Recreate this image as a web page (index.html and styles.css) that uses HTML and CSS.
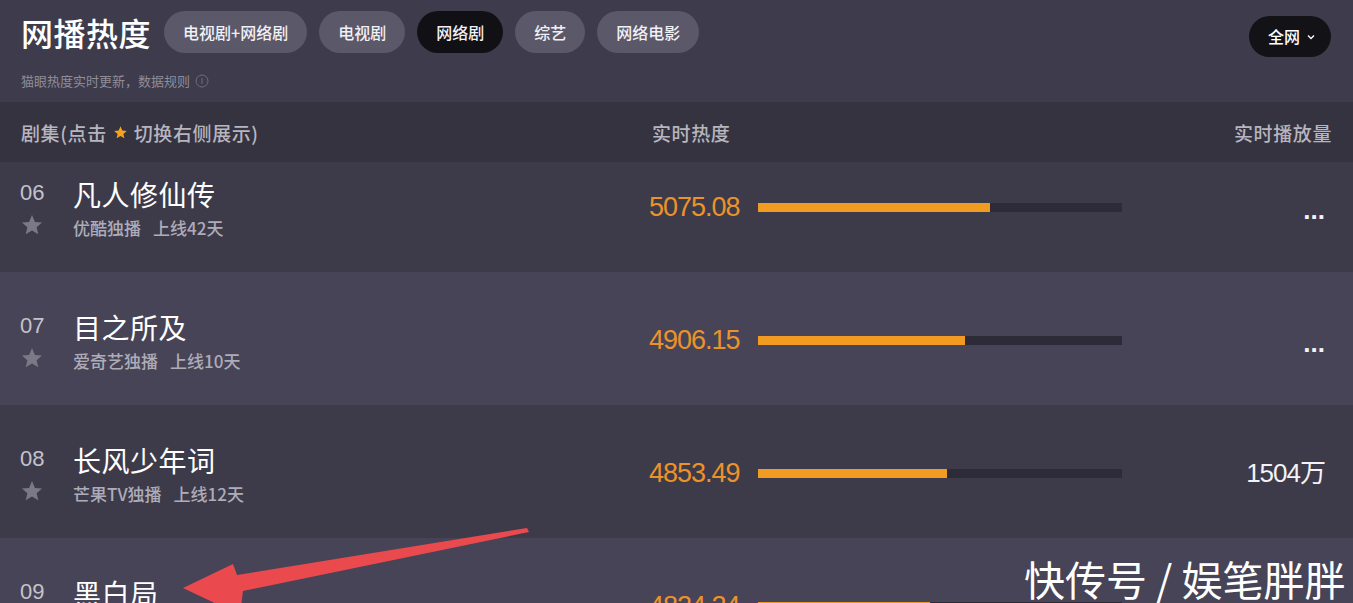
FILE: index.html
```html
<!DOCTYPE html>
<html lang="zh-CN">
<head>
    <meta charset="UTF-8">
    <meta name="viewport" content="width=device-width, initial-scale=1.0">
    <title>网播热度</title>
    <link rel="stylesheet" href="styles.css">
</head>
<body>
    <div class="top">
      <div class="top-bar">
        <h1 class="title">网播热度</h1>
        <div class="tabs">
          <span class="tab">电视剧+网络剧</span>
          <span class="tab">电视剧</span>
          <span class="tab active">网络剧</span>
          <span class="tab">综艺</span>
          <span class="tab">网络电影</span>
        </div>
        <div class="area">全网
          <svg class="caret" width="8" height="6" viewBox="0 0 8 6"><polyline points="1,1.5 4,4.5 7,1.5" fill="none" stroke="#fff" stroke-width="1.3"/></svg>
        </div>
      </div>
      <div class="note">猫眼热度实时更新，数据规则
        <svg class="info" width="14" height="14" viewBox="0 0 14 14"><circle cx="7" cy="7" r="6" fill="none" stroke="#6f6d7a" stroke-width="1"/><line x1="7" y1="4" x2="7" y2="10" stroke="#6f6d7a" stroke-width="1"/></svg>
      </div>
    </div>

    <div class="thead">
      <div class="th-name">剧集(点击
        <svg class="hstar" width="15" height="15" viewBox="0 0 24 24"><path d="M12 2l2.9 6.9 7.1.6-5.4 4.7 1.7 7-6.3-3.8-6.3 3.8 1.7-7L1.9 9.5l7.2-.6z" fill="#f5a21f"/></svg>
        切换右侧展示)</div>
      <div class="th-heat">实时热度</div>
      <div class="th-play">实时播放量</div>
    </div>

    <div class="list">
      <div class="row dark first">
        <div class="rank"><div class="num">06</div>
          <svg class="star" width="24" height="24" viewBox="0 0 24 24"><path d="M12 2l2.9 6.9 7.1.6-5.4 4.7 1.7 7-6.3-3.8-6.3 3.8 1.7-7L1.9 9.5l7.2-.6z"/></svg></div>
        <div class="name"><div class="show">凡人修仙传</div><div class="meta">优酷独播<span class="days">上线42天</span></div></div>
        <div class="heat"><span class="hnum">5075.08</span><span class="bar"><span class="fill" style="width:63.7%"></span></span></div>
        <div class="play dots">...</div>
      </div>
      <div class="row light">
        <div class="rank"><div class="num">07</div>
          <svg class="star" width="24" height="24" viewBox="0 0 24 24"><path d="M12 2l2.9 6.9 7.1.6-5.4 4.7 1.7 7-6.3-3.8-6.3 3.8 1.7-7L1.9 9.5l7.2-.6z"/></svg></div>
        <div class="name"><div class="show">目之所及</div><div class="meta">爱奇艺独播<span class="days">上线10天</span></div></div>
        <div class="heat"><span class="hnum">4906.15</span><span class="bar"><span class="fill" style="width:56.9%"></span></span></div>
        <div class="play dots">...</div>
      </div>
      <div class="row dark">
        <div class="rank"><div class="num">08</div>
          <svg class="star" width="24" height="24" viewBox="0 0 24 24"><path d="M12 2l2.9 6.9 7.1.6-5.4 4.7 1.7 7-6.3-3.8-6.3 3.8 1.7-7L1.9 9.5l7.2-.6z"/></svg></div>
        <div class="name"><div class="show">长风少年词</div><div class="meta">芒果TV独播<span class="days">上线12天</span></div></div>
        <div class="heat"><span class="hnum">4853.49</span><span class="bar"><span class="fill" style="width:51.9%"></span></span></div>
        <div class="play">1504万</div>
      </div>
      <div class="row light">
        <div class="rank"><div class="num">09</div>
          <svg class="star" width="24" height="24" viewBox="0 0 24 24"><path d="M12 2l2.9 6.9 7.1.6-5.4 4.7 1.7 7-6.3-3.8-6.3 3.8 1.7-7L1.9 9.5l7.2-.6z"/></svg></div>
        <div class="name"><div class="show">黑白局</div><div class="meta">爱奇艺独播<span class="days">上线5天</span></div></div>
        <div class="heat"><span class="hnum">4824.24</span><span class="bar"><span class="fill" style="width:47.3%"></span></span></div>
        <div class="play dots">...</div>
      </div>
    </div>

    <svg class="arrow" width="1353" height="603" viewBox="0 0 1353 603">
      <polygon points="183,588 233,564 237,575 527,528 529,532 243,591 240,615" fill="#ea4a4e"/>
    </svg>
    <div class="mark">快传号 / 娱笔胖胖</div>
</body>
</html>
```

FILE: styles.css
```css
body {
    margin: 0;
    height: 603px;
    overflow: hidden;
    position: relative;
    background-color: #3e3c4c;
    font-family: "Noto Sans CJK SC", "Liberation Sans", sans-serif;
    color: #fff;
  }

  .top {
    padding: 11px 22px 0 21px;
    height: 102px;
    box-sizing: border-box;
  }

  .top-bar {
    display: flex;
    align-items: flex-start;
  }

  .title {
    margin: 0;
    font-size: 32px;
    font-weight: 500;
    line-height: 42px;
    height: 42px;
    letter-spacing: 0.5px;
  }

  .tabs {
    display: flex;
    gap: 12px;
    margin-left: 13px;
    flex: 1;
  }

  .tab {
    height: 42px;
    line-height: 42px;
    padding: 0 19px;
    border-radius: 21px;
    background-color: #5a5869;
    font-size: 16px;
    font-weight: 500;
    color: #f1f0f4;
  }

  .tab.active {
    background-color: #111015;
  }

  .area {
    margin-top: 5px;
    height: 41px;
    width: 82px;
    box-sizing: border-box;
    padding-left: 19px;
    border-radius: 21px;
    background-color: #131217;
    font-size: 16px;
    font-weight: 500;
    line-height: 41px;
    display: flex;
    align-items: center;
    gap: 7px;
  }

  .note {
    margin-top: 15px;
    font-size: 13px;
    line-height: 18px;
    color: #8f8d99;
    display: flex;
    align-items: center;
    gap: 5px;
  }

  .thead {
    display: flex;
    align-items: center;
    height: 60px;
    padding: 0 21px;
    background-color: #35333f;
    font-size: 19px;
    font-weight: 500;
    letter-spacing: 0.6px;
    color: #b7b5bf;
  }

  .th-name {
    width: 631px;
    display: flex;
    align-items: center;
    gap: 6px;
  }

  .th-heat {
    flex: 1;
  }

  .list {
    height: 441px;
    overflow: hidden;
  }

  .row {
    display: flex;
    align-items: flex-start;
    height: 133px;
    box-sizing: border-box;
    padding: 38px 28px 0 20px;
  }

  .row.first {
    margin-top: -23px;
  }

  .dark {
    background-color: #3d3b4a;
  }

  .light {
    background-color: #464456;
  }

  .rank {
    width: 53px;
  }

  .num {
    margin-top: 3px;
    font-family: "Liberation Sans", sans-serif;
    font-size: 22px;
    line-height: 26px;
    color: #c4c3cb;
  }

  .star {
    display: block;
    margin-top: 7px;
    fill: #7b7987;
  }

  .name {
    width: 576px;
  }

  .show {
    font-size: 28px;
    line-height: 34px;
    letter-spacing: 0.5px;
  }

  .meta {
    margin-top: 6px;
    font-size: 17px;
    font-weight: 500;
    line-height: 22px;
    color: #aeacb8;
  }

  .days {
    margin-left: 12px;
  }

  .heat {
    display: flex;
    align-items: center;
    margin-top: 14px;
    height: 32px;
  }

  .hnum {
    width: 109px;
    font-family: "Liberation Sans", sans-serif;
    font-size: 27px;
    letter-spacing: -1px;
    color: #ec922a;
  }

  .bar {
    display: block;
    width: 364px;
    height: 9px;
    background-color: #2d2b37;
  }

  .fill {
    display: block;
    height: 100%;
    background-color: #f29b22;
  }

  .play {
    flex: 1;
    margin-top: 14px;
    text-align: right;
    font-family: "Liberation Sans", "Noto Sans CJK SC", sans-serif;
    font-size: 26px;
    line-height: 32px;
    letter-spacing: -1px;
    color: #f3f2f6;
  }

  .dots {
    font-weight: bold;
    letter-spacing: 0;
    margin-top: 17px;
  }

  .arrow {
    position: absolute;
    top: 0;
    left: 0;
    pointer-events: none;
  }

  .mark {
    position: absolute;
    left: 1024px;
    top: 550px;
    font-size: 41px;
    line-height: 56px;
    color: #fff;
    white-space: nowrap;
  }
```
